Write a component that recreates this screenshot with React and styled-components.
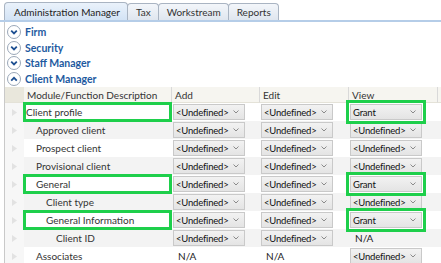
import styled, { createGlobalStyle, css } from 'styled-components';

const Global = createGlobalStyle`
  body {
    margin: 0;
    background: #fff;
    font-family: Lato, "Noto Sans", sans-serif;
    font-size: 10px;
    color: #222;
  }
`;

const sections = [
  { name: 'Firm', open: false },
  { name: 'Security', open: false },
  { name: 'Staff Manager', open: false },
  { name: 'Client Manager', open: true },
];

const U = '<Undefined>';
const rows = [
  { label: 'Client profile', level: 0, add: U, edit: U, view: 'Grant', mark: true },
  { label: 'Approved client', level: 1, add: U, edit: U, view: U },
  { label: 'Prospect client', level: 1, add: U, edit: U, view: U },
  { label: 'Provisional client', level: 1, add: U, edit: U, view: U },
  { label: 'General', level: 1, add: U, edit: U, view: 'Grant', mark: true },
  { label: 'Client type', level: 2, add: U, edit: U, view: U },
  { label: 'General Information', level: 2, add: U, edit: U, view: 'Grant', mark: true },
  { label: 'Client ID', level: 3, add: U, edit: U, view: 'N/A' },
  { label: 'Associates', level: 1, add: 'N/A', edit: 'N/A', view: U },
];

const App = () => (
  <>
    <Global />
    <Tabs>
      <Tab active>Administration Manager</Tab>
      <Tab>Tax</Tab>
      <Tab>Workstream</Tab>
      <Tab>Reports</Tab>
    </Tabs>
    <Panel>
      {sections.map((s) => (
        <Section key={s.name}>
          <Toggle>
            <svg width="8" height="6" viewBox="0 0 8 6">
              <path
                d={s.open ? 'M1.2 4.6 L4 1.8 L6.8 4.6' : 'M1.2 1.6 L4 4.4 L6.8 1.6'}
                fill="none"
                stroke="#1d4f91"
                strokeWidth="1.8"
              />
            </svg>
          </Toggle>
          {s.name}
        </Section>
      ))}
      <Grid>
        <HeadCorner />
        <HeadCell>Module/Function Description</HeadCell>
        <HeadCell>Add</HeadCell>
        <HeadCell>Edit</HeadCell>
        <HeadCell>View</HeadCell>
        <HeadCell />
        {rows.map((r, i) => (
          <Row key={r.label} alt={i % 2 === 1}>
            <Indicator>
              <svg width="5" height="7" viewBox="0 0 5 7">
                <path d="M0 0 L5 3.5 L0 7 Z" fill="#e2e2e2" />
              </svg>
            </Indicator>
            <Desc level={r.level} mark={r.mark}>{r.label}</Desc>
            <Value v={r.add} />
            <Value v={r.edit} />
            <Value v={r.view} mark={r.mark} />
            <Cell />
          </Row>
        ))}
      </Grid>
    </Panel>
  </>
);

const Value = ({ v, mark }) => (
  <Cell>
    {v === 'N/A' ? (
      <NA>N/A</NA>
    ) : (
      <Combo mark={mark}>
        <span>{v}</span>
        <svg width="6" height="4" viewBox="0 0 6 4">
          <path d="M0.5 0.5 L3 3 L5.5 0.5" fill="none" stroke="#8a8a8a" strokeWidth="1" />
        </svg>
      </Combo>
    )}
  </Cell>
);

const Tabs = styled.div`
  display: flex;
  align-items: flex-end;
  height: 20px;
  padding: 0 0 0 4px;
  border-bottom: 2px solid #b5cde8;
`;

const Tab = styled.div`
  height: 16px;
  padding: 0 7px 0 8px;
  margin-right: -1px;
  display: flex;
  align-items: center;
  border: 1px solid #a9b4c2;
  border-bottom: none;
  border-radius: 4px 4px 0 0;
  color: #333;
  background: linear-gradient(#f3f6fa, #dfe6ef);
  white-space: nowrap;
  ${(p) =>
    p.active &&
    css`
      height: 17px;
      padding: 0 7px 0 9px;
      background: linear-gradient(#eaf2fb, #d3e3f5);
      color: #222;
    `}
`;

const Panel = styled.div`
  margin-left: 4px;
  border-left: 1px solid #c9c9c9;
  padding-top: 2px;
`;

const Section = styled.div`
  height: 15.75px;
  display: flex;
  align-items: center;
  gap: 4px;
  padding-left: 2px;
  font-size: 10.5px;
  font-weight: bold;
  color: #1e5aa0;
`;

const Toggle = styled.span`
  width: 12px;
  height: 12px;
  border: 1px solid #9aa7b8;
  border-radius: 50%;
  background: #fff;
  display: flex;
  align-items: center;
  justify-content: center;
`;

const Grid = styled.div`
  display: grid;
  grid-template-columns: 19px 147px 88px 89px 89px 1fr;
  grid-template-rows: 16px;
  grid-auto-rows: 18px;
  white-space: nowrap;
`;

const HeadCorner = styled.div`
  background: #e9e7dc;
  border-bottom: 1px solid #e4e2d8;
`;

const HeadCell = styled.div`
  background: #f6f5f0;
  border-left: 1px solid #d9d9d9;
  border-bottom: 1px solid #e4e2d8;
  padding-left: 3px;
  display: flex;
  align-items: center;
  color: #333;
  &:nth-child(2) {
    border-left: none;
  }
`;

const Row = styled.div`
  display: contents;
  & > div {
    background: ${(p) => (p.alt ? '#f3f3f3' : '#fff')};
  }
`;

const Indicator = styled.div`
  display: flex;
  align-items: center;
  padding-left: 7px;
  && {
    background: #f7f7f7;
  }
`;

const marked = css`
  outline: 3px solid #1ecf4b;
  z-index: 1;
`;

const Desc = styled.div`
  display: flex;
  align-items: center;
  padding-left: ${(p) => 2 + p.level * 10}px;
  color: #333;
  ${(p) => p.mark && marked}
  outline-offset: -2px;
`;

const Cell = styled.div`
  display: flex;
  align-items: center;
  padding-left: 2px;
`;

const Combo = styled.div`
  width: 72px;
  height: 16px;
  box-sizing: border-box;
  border: 1px solid #c9c9c9;
  background: linear-gradient(#f2f2f2, #e4e4e4);
  display: flex;
  align-items: center;
  justify-content: space-between;
  padding: 0 5px 0 2px;
  color: #111;
  font-size: 9.5px;
  letter-spacing: -0.2px;
  ${(p) => p.mark && marked}
  outline-offset: 1px;
  svg {
    flex-shrink: 0;
  }
`;

const NA = styled.span`
  padding-left: 5px;
  color: #222;
`;

export default App;
